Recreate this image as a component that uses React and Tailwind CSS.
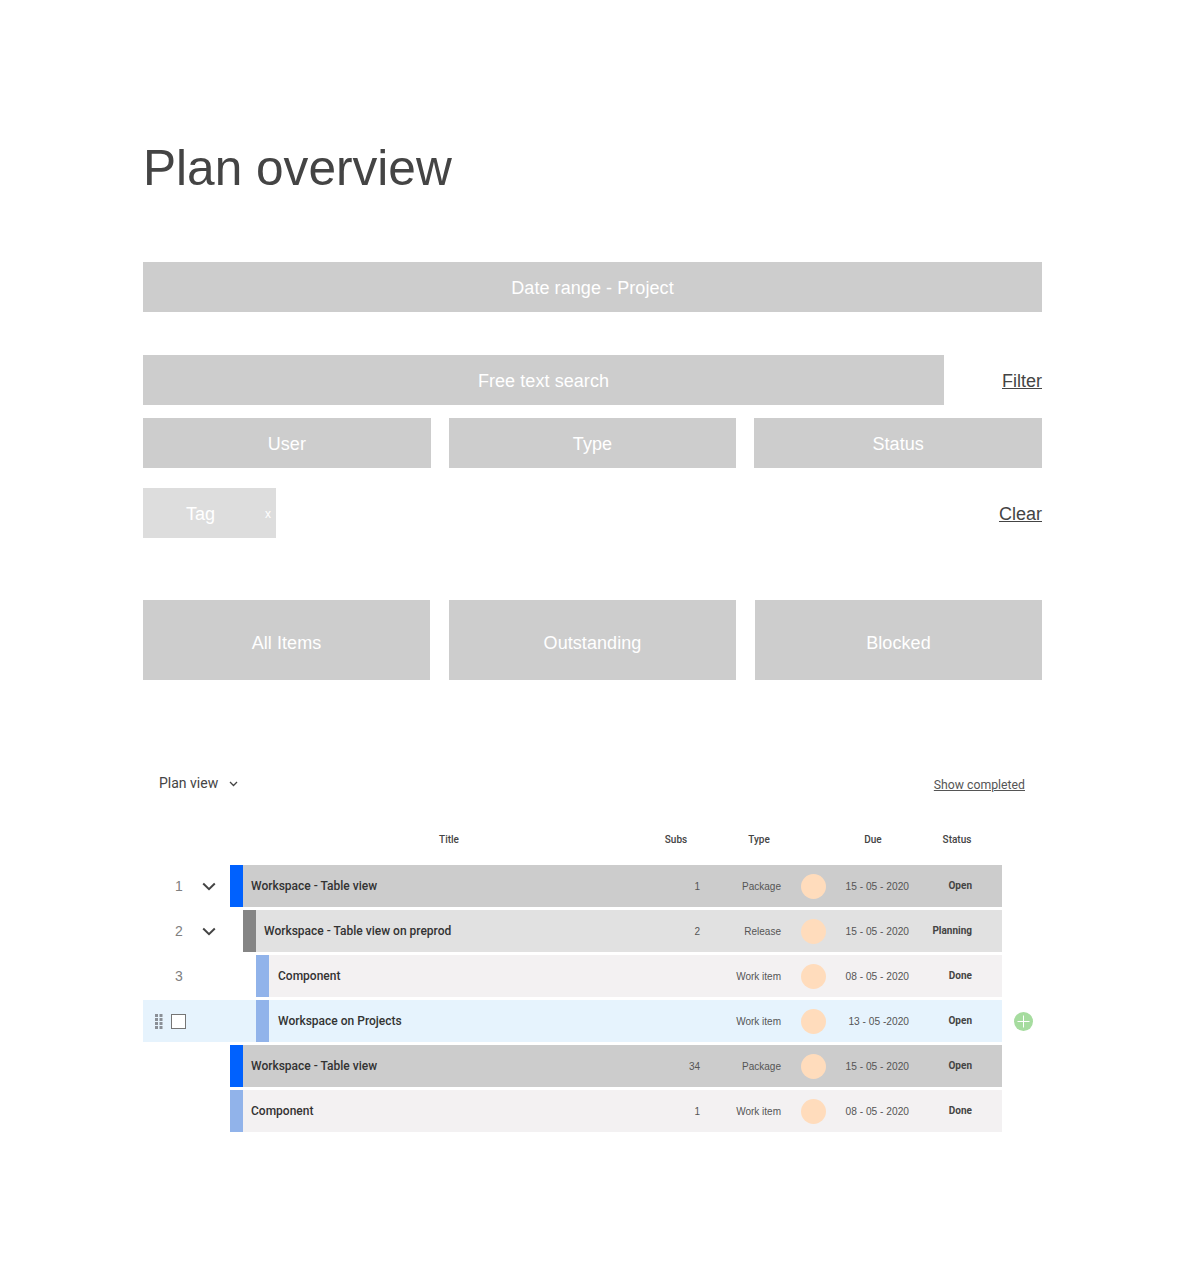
import React from "react";

const Box = ({ children, className = "pt-[2px]" }) => (
  <div className={`flex items-center justify-center bg-[#cdcdcd] text-white text-[18px] tracking-[0.004em] ${className}`}>{children}</div>
);

const Chevron = () => (
  <svg width="14" height="9" viewBox="0 0 14 9" fill="none" className="block">
    <path d="M1.2 1.5 7 7.2 12.8 1.5" stroke="#444444" strokeWidth="2" />
  </svg>
);

const Handle = () => (
  <svg width="8" height="15" viewBox="0 0 8 15" className="block">
    {[0, 4, 8, 12].map((y) =>
      [0, 4.5].map((x) => <rect key={`${x}-${y}`} x={x} y={y} width="3" height="3" fill="#8a8f96" />)
    )}
  </svg>
);

const rows = [
  { n: "1", chevron: true, indent: 0, bar: "bg-[#0061fe]", bg: "bg-[#cccccc]", pad: "pl-2", title: "Workspace - Table view", subs: "1", type: "Package", date: "15 - 05 - 2020", status: "Open" },
  { n: "2", chevron: true, indent: 1, bar: "bg-[#858585]", bg: "bg-[#e1e1e1]", pad: "pl-2", title: "Workspace - Table view on preprod", subs: "2", type: "Release", date: "15 - 05 - 2020", status: "Planning" },
  { n: "3", indent: 2, bar: "bg-[#91b3ea]", bg: "bg-[#f3f1f2]", pad: "pl-[9px]", title: "Component", subs: "", type: "Work item", date: "08 - 05 - 2020", status: "Done" },
  { hover: true, indent: 2, bar: "bg-[#91b3ea]", bg: "bg-[#e6f3fd]", pad: "pl-[9px]", title: "Workspace on Projects", subs: "", type: "Work item", date: "13 - 05 -2020", status: "Open" },
  { indent: 0, bar: "bg-[#0061fe]", bg: "bg-[#cccccc]", pad: "pl-2", title: "Workspace - Table view", subs: "34", type: "Package", date: "15 - 05 - 2020", status: "Open" },
  { indent: 0, bar: "bg-[#91b3ea]", bg: "bg-[#f3f1f2]", pad: "pl-2", title: "Component", subs: "1", type: "Work item", date: "08 - 05 - 2020", status: "Done" },
];

const indentClass = ["", "ml-[13px]", "ml-[26px]"];

const Row = ({ r }) => (
  <div className="flex h-[42px] items-stretch">
    <div className={`flex w-[87px] shrink-0 items-center ${r.hover ? "bg-[#e6f3fd]" : ""}`}>
      {r.hover ? (
        <>
          <div className="ml-3"><Handle /></div>
          <div className="ml-2 h-[15px] w-[15px] border border-[#757575] bg-white"></div>
        </>
      ) : r.n ? (
        <>
          <div className="ml-[26px] w-[20px] text-center text-[14px] text-[#808080]">{r.n}</div>
          {r.chevron && <div className="ml-[13px]"><Chevron /></div>}
        </>
      ) : null}
    </div>
    <div className={`flex w-[772px] shrink-0 items-stretch ${r.hover ? "bg-[#e6f3fd]" : ""}`}>
      <div className={`flex flex-1 items-stretch ${indentClass[r.indent]} ${r.bg}`}>
        <div className={`w-[13px] shrink-0 ${r.bar}`}></div>
        <div className={`flex flex-1 items-center ${r.pad} font-['Roboto'] text-[12px] font-medium text-[#333333]`}>{r.title}</div>
        <div className="flex items-center text-[10px] text-[#555555]">
          <div className="w-[30px] text-right">{r.subs}</div>
          <div className="w-[81px] text-right">{r.type}</div>
          <div className="ml-5 h-[25px] w-[25px] rounded-full bg-[#ffdcbc]"></div>
          <div className="w-[83px] pt-[2px] text-right text-[10.2px]">{r.date}</div>
          <div className="w-[63px] pb-[2px] text-right font-['Roboto'] font-bold text-[#444444]">{r.status}</div>
          <div className="w-[30px]"></div>
        </div>
      </div>
    </div>
    {r.hover && (
      <div className="ml-3 flex items-center">
        <svg width="19" height="19" viewBox="0 0 19 19" className="block">
          <circle cx="9.5" cy="9.5" r="9.5" fill="#a6dc9f" />
          <path d="M9.5 3.5v12M3.5 9.5h12" stroke="#ffffff" strokeWidth="1" />
        </svg>
      </div>
    )}
  </div>
);

export default function App() {
  return (
    <div className="min-h-[1268px] bg-white font-['Liberation_Sans',sans-serif]">
      <div className="ml-[143px] w-[899px] pt-[136px]">
        <h1 className="h-[64px] text-[49.6px] leading-[64px] font-normal text-[#444444]">Plan overview</h1>

        <Box className="mt-[62px] h-[50px] pt-[2px]">Date range - Project</Box>

        <div className="mt-[43px] flex items-center justify-between">
          <Box className="h-[50px] w-[801px] pt-[2px]">Free text search</Box>
          <a className="pt-[2px] text-[18px] text-[#444444] underline">Filter</a>
        </div>

        <div className="mt-[13px] grid grid-cols-3 gap-[18px]">
          <Box className="h-[50px] pt-[2px]">User</Box>
          <Box className="h-[50px] pt-[2px]">Type</Box>
          <Box className="h-[50px] pt-[2px]">Status</Box>
        </div>

        <div className="mt-5 flex items-center justify-between">
          <div className="relative flex h-[50px] w-[133px] items-center bg-[#dddddd] pt-[2px] text-white">
            <span className="ml-[43px] text-[18px]">Tag</span>
            <span className="absolute right-[5px] top-[17px] text-[12px]">x</span>
          </div>
          <a className="pt-[2px] text-[18px] text-[#444444] underline">Clear</a>
        </div>

        <div className="mt-[62px] grid grid-cols-3 gap-[19px]">
          <Box className="h-20 pt-[6px]">All Items</Box>
          <Box className="h-20 pt-[6px]">Outstanding</Box>
          <Box className="h-20 pt-[6px]">Blocked</Box>
        </div>

        <div className="mt-[88px] flex h-8 items-center justify-between pl-4 pr-[17px] font-['Roboto']">
          <div className="flex items-center pb-[2px] text-[14px] text-[#444444]">
            Plan view
            <svg width="9" height="6" viewBox="0 0 9 6" fill="none" className="ml-[11px] mt-[2px] block">
              <path d="M1 1l3.5 3.5L8 1" stroke="#444444" strokeWidth="1.3" />
            </svg>
          </div>
          <a className="pt-[2px] text-[12.25px] text-[#555555] underline">Show completed</a>
        </div>

        <div className="mt-[27px] flex h-[24px] items-center font-['Roboto'] text-[10px] font-medium text-[#444444]">
          <div className="ml-[105px] w-[402px] text-center">Title</div>
          <div className="w-[52px] text-center">Subs</div>
          <div className="w-[114px] text-center">Type</div>
          <div className="w-[114px] text-center">Due</div>
          <div className="w-[54px] text-center">Status</div>
        </div>

        <div className="mt-[14px] flex flex-col gap-[3px]">
          {rows.map((r, i) => <Row key={i} r={r} />)}
        </div>
      </div>
    </div>
  );
}
